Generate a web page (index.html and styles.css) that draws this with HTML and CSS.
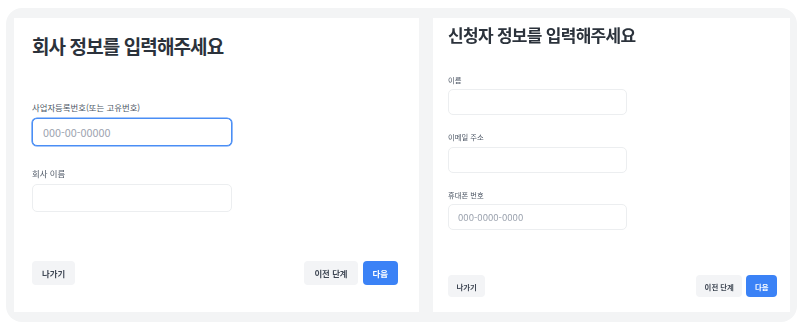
FILE: index.html
```html
<!DOCTYPE html>
<html lang="ko">
<head>
    <meta charset="utf-8">
    <title>가입 정보 입력</title>
    <link rel="stylesheet" href="styles.css">
</head>
<body>

<div class="steps">
    <form class="panel company">
        <h1>회사 정보를 입력해주세요</h1>

        <div class="field">
            <label for="biz_no">사업자등록번호(또는 고유번호)</label>
            <input id="biz_no" type="text" class="focused" placeholder="000-00-00000" autofocus>
        </div>

        <div class="field">
            <label for="company_name">회사 이름</label>
            <input id="company_name" type="text">
        </div>

        <div class="actions">
            <button type="button" class="btn">나가기</button>
            <span class="spacer"></span>
            <button type="button" class="btn">이전 단계</button>
            <button type="submit" class="btn primary">다음</button>
        </div>
    </form>

    <form class="panel applicant">
        <h1>신청자 정보를 입력해주세요</h1>

        <div class="field">
            <label for="name">이름</label>
            <input id="name" type="text">
        </div>

        <div class="field">
            <label for="email">이메일 주소</label>
            <input id="email" type="text">
        </div>

        <div class="field">
            <label for="phone">휴대폰 번호</label>
            <input id="phone" type="text" placeholder="000-0000-0000">
        </div>

        <div class="actions">
            <button type="button" class="btn">나가기</button>
            <span class="spacer"></span>
            <button type="button" class="btn">이전 단계</button>
            <button type="submit" class="btn primary">다음</button>
        </div>
    </form>
</div>

</body>
</html>
```

FILE: styles.css
```css
body, html {
    margin: 0;
    padding: 0;
    background: #fff;
    font-family: "Noto Sans CJK KR", "Noto Sans", sans-serif;
}

.steps {
    display: flex;
    gap: 14px;
    margin: 8px 13px 0 6px;
    padding: 10px 7px 10px 8px;
    height: 294px;
    background-color: #f3f4f5;
    border-radius: 16px;
}

.panel {
    display: flex;
    flex-direction: column;
    background-color: #fff;
    margin: 0;
}

h1 {
    margin: 0;
    color: #2b323b;
    font-weight: bold;
}

label {
    display: block;
    color: #4b5563;
}

input {
    display: block;
    box-sizing: border-box;
    margin: 0;
    border: 1px solid #eceef0;
    background: #fff;
    font-family: inherit;
    color: #374151;
    outline: none;
}

input::placeholder {
    color: #9ca3af;
}

input.focused {
    border-color: #4a8ef5;
    box-shadow: 0 0 0 0.6px #4a8ef5;
}

.actions {
    display: flex;
    margin-top: auto;
}

.spacer {
    flex: 1;
}

.btn {
    border: 0;
    background-color: #f3f4f6;
    color: #3f4754;
    font-family: inherit;
    font-weight: bold;
    cursor: pointer;
    padding-top: 0;
    padding-bottom: 0;
}

.btn.primary {
    background-color: #3b82f6;
    color: #fff;
}

/* company panel */

.company {
    width: 405px;
    padding: 17px 21px 27px 18px;
    box-sizing: border-box;
}

.company h1 {
    font-size: 19px;
    line-height: 22px;
    letter-spacing: -0.9px;
    margin-bottom: 43.5px;
}

.company .field {
    margin-bottom: 20.5px;
}

.company label {
    font-size: 8.4px;
    line-height: 12px;
    margin-bottom: 5.5px;
}

.company input {
    width: 200px;
    height: 28px;
    border-radius: 5px;
    padding: 0 10px;
    font-size: 10.8px;
}

.company .actions {
    gap: 5px;
}

.company .btn {
    height: 24px;
    padding-left: 10px;
    padding-right: 10px;
    border-radius: 4px;
    font-size: 8.4px;
}

/* applicant panel */

.applicant {
    flex: 1;
    padding: 7px 13px 15px 15px;
}

.applicant h1 {
    font-size: 17px;
    line-height: 20px;
    letter-spacing: -0.7px;
    margin-bottom: 29.5px;
}

.applicant .field {
    margin-bottom: 17px;
}

.applicant label {
    font-size: 7.3px;
    line-height: 11px;
    margin-bottom: 3.5px;
}

.applicant input {
    width: 179px;
    height: 26px;
    border-radius: 5px;
    padding: 0 9px;
    font-size: 9.6px;
}

.applicant .actions {
    gap: 4px;
}

.applicant .btn {
    height: 22px;
    padding-left: 8.5px;
    padding-right: 8.5px;
    border-radius: 4px;
    font-size: 7.4px;
}
```
